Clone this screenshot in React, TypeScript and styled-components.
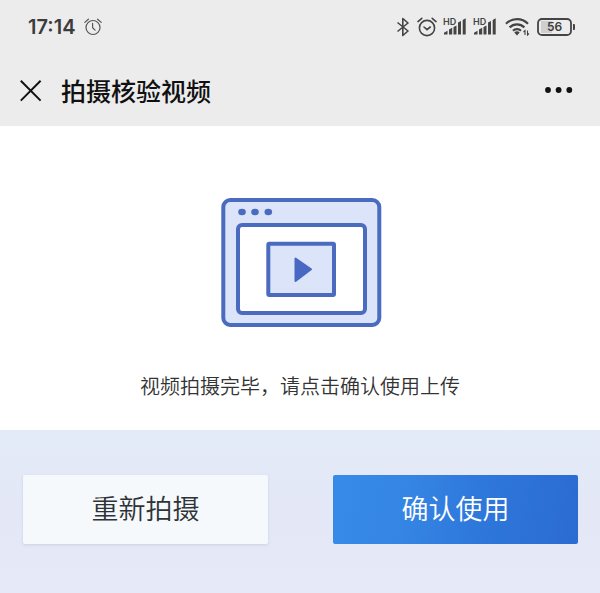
import React from "react";
import styled, { createGlobalStyle, css } from "styled-components";

const GlobalStyle = createGlobalStyle`
  *, *::before, *::after { box-sizing: border-box; }
  html, body { margin: 0; padding: 0; }
  body {
    background: #e4e9f7;
    font-family: "Noto Sans CJK SC", "Noto Sans", sans-serif;
    color: #333;
  }
  svg { display: block; flex: none; }
`;

const Page = styled.div`
  display: flex;
  flex-direction: column;
  min-height: 100vh;
`;

const Header = styled.header`
  background: #ececec;
`;

const StatusBar = styled.div`
  display: flex;
  align-items: center;
  justify-content: space-between;
  height: 54px;
  padding: 0 24px 0 28px;
  color: #444;
`;

const StatusLeft = styled.div`
  display: flex;
  align-items: center;
  gap: 9px;
`;

const Clock = styled.time`
  font-family: Inter, "Liberation Sans", sans-serif;
  font-size: 20px;
  line-height: 24px;
  font-weight: 600;
  color: #3c3c3c;
`;

const StatusRight = styled.div`
  display: flex;
  align-items: center;
  gap: 6px;
`;

const HdText = styled.text`
  font-family: Inter, "Liberation Sans", sans-serif;
  font-size: 9px;
  font-weight: 600;
  fill: #444;
`;

const BatteryText = styled.text`
  font-family: Inter, "Liberation Sans", sans-serif;
  font-size: 12px;
  font-weight: 600;
  fill: #3c3c3c;
`;

const NavBar = styled.nav`
  display: flex;
  align-items: center;
  height: 72px;
  padding: 0 25px 0 18px;
`;

const IconButton = styled.button`
  display: flex;
  align-items: center;
  justify-content: center;
  padding: 0;
  border: 0;
  background: none;
  color: #111;
  cursor: pointer;
`;

const Title = styled.h1`
  flex: 1;
  margin: 0 0 0 18px;
  font-size: 25px;
  line-height: 36px;
  font-weight: 500;
  color: #111;
`;

const Content = styled.main`
  display: flex;
  flex-direction: column;
  align-items: center;
  padding: 71px 20px 28px;
  background: #fff;
`;

const Message = styled.p`
  margin: 42px 0 0;
  font-size: 20px;
  line-height: 32px;
  font-weight: 350;
  text-align: center;
  color: #333;
`;

const Actions = styled.footer`
  flex: 1;
  display: grid;
  grid-template-columns: 1fr 1fr;
  align-items: start;
  gap: 65px;
  padding: 45px 22px 48px 23px;
  background: linear-gradient(180deg, #e3eaf8 0%, #e4e8f6 50%, #e5e9f8 100%);
`;

const ActionButton = styled.button<{ $primary?: boolean }>`
  height: 69px;
  padding: 0 0 4px;
  border: 0;
  border-radius: 2px;
  font-family: inherit;
  font-size: 27px;
  line-height: 40px;
  font-weight: 350;
  cursor: pointer;
  ${({ $primary }) =>
    $primary
      ? css`
          color: #fff;
          background: linear-gradient(100deg, #378be8 0%, #3585e4 30%, #2e77db 60%, #2b6bd2 100%);
        `
      : css`
          color: #2f3338;
          background: #f5f9fc;
          box-shadow: 0 1px 3px rgba(150, 170, 190, 0.35);
        `}
`;

const SmallAlarm = () => (
  <svg width="18" height="18" viewBox="0 0 18 18" fill="none" stroke="#555" strokeWidth="1.2" strokeLinecap="round">
    <circle cx="9" cy="9.5" r="7" />
    <path d="M8.6 5.4v4.3l2.5 2.4M.8 4.4 4.4 1.2M17.2 4.4l-3.6-3.2" />
  </svg>
);

const Bluetooth = () => (
  <svg width="14" height="20" viewBox="1 0 14 20" fill="none" stroke="#444" strokeWidth="1.6" strokeLinejoin="round">
    <path d="M1.5 5.5 12 14l-5.2 4.5v-17L12 6 1.5 14.5" />
  </svg>
);

const Alarm = () => (
  <svg width="20" height="20" viewBox="0 0 20 20" fill="none" stroke="#444" strokeWidth="1.6" strokeLinecap="round">
    <circle cx="10" cy="11" r="7.6" />
    <path d="m7 10 3 2.6 3.3-2.6M1 4.6 4.8 1.3M19 4.6l-3.8-3.3" />
  </svg>
);

const Signal = () => (
  <svg width="24" height="20" viewBox="0 0 24 20" fill="#444">
    <HdText x="0" y="7.5">HD</HdText>
    <path d="M1 17.500v-1.800l3.500-2v3.800zM6 17.500v-5l3.200-1.700v6.700zM10.500 17.500V10l3-1.500v9zM15 17.500V5.500L18 4v13.500zM19.700 17.500V3l3-1.700v16.200z" />
  </svg>
);

const Wifi = () => (
  <svg width="28" height="20" viewBox="-2 0 28 20" fill="none" stroke="#444" strokeWidth="2.200">
    <path d="M1 6.800a15.500 15.500 0 0 1 22 0M4.600 10.400a10.500 10.500 0 0 1 14.800 0M8 13.800a5.700 5.700 0 0 1 8 0" />
    <path d="m9.300 15.500 2.700 3 2.700-3a4 4 0 0 0-5.400 0z" fill="#444" stroke="none" />
    <path d="M20 18v-4.500l-1.500 1.500M22.500 13.500V18l1.500-1.500" strokeWidth="1.100" />
  </svg>
);

const Battery = () => (
  <svg width="39" height="18" viewBox="0 0 39 18">
    <path d="M4 3h11v12H4z" fill="#cfcfcf" />
    <rect x="1" y="1" width="33" height="16" rx="4" fill="none" stroke="#444" strokeWidth="1.800" />
    <path d="M36 6h1a1 1 0 0 1 1 1v4a1 1 0 0 1-1 1h-1z" fill="#444" />
    <BatteryText x="17.500" y="13.400" textAnchor="middle">56</BatteryText>
  </svg>
);

const CloseIcon = () => (
  <svg width="25" height="25" viewBox="0 0 25 25" fill="none" stroke="currentColor" strokeWidth="2">
    <path d="m2.800 2.800 19.800 19.800M22.600 2.800 2.800 22.600" />
  </svg>
);

const MoreIcon = () => (
  <svg width="32" height="12" viewBox="0 0 32 12" fill="currentColor">
    <circle cx="5" cy="6" r="2.900" />
    <circle cx="15.600" cy="6" r="2.900" />
    <circle cx="26.300" cy="6" r="2.900" />
  </svg>
);

const VideoWindow = () => (
  <svg width="164" height="131" viewBox="0 0 164 131" fill="#dbe4f8" stroke="#4a6bc0" strokeWidth="4">
    <rect x="5.300" y="3" width="156" height="125" rx="7" />
    <rect x="20" y="28" width="127" height="88" rx="4" fill="#fff" />
    <rect x="50.300" y="46.700" width="65.700" height="51.300" rx="1" />
    <path d="M77.500 61.500v22.500L93 72.300z" fill="#4968c4" stroke="#4968c4" strokeWidth="2" strokeLinejoin="round" />
    <g fill="#4a6bc0" stroke="none">
      <ellipse cx="24" cy="15" rx="3.800" ry="3.200" />
      <ellipse cx="37" cy="15" rx="3.800" ry="3.200" />
      <ellipse cx="50.300" cy="15" rx="3.800" ry="3.200" />
    </g>
  </svg>
);

export default function App() {
  return (
    <Page>
      <GlobalStyle />
      <Header>
        <StatusBar>
          <StatusLeft>
            <Clock>17:14</Clock>
            <SmallAlarm />
          </StatusLeft>
          <StatusRight>
            <Bluetooth />
            <Alarm />
            <Signal />
            <Signal />
            <Wifi />
            <Battery />
          </StatusRight>
        </StatusBar>
        <NavBar>
          <IconButton type="button" aria-label="关闭">
            <CloseIcon />
          </IconButton>
          <Title>拍摄核验视频</Title>
          <IconButton type="button" aria-label="更多">
            <MoreIcon />
          </IconButton>
        </NavBar>
      </Header>
      <Content>
        <VideoWindow />
        <Message>视频拍摄完毕，请点击确认使用上传</Message>
      </Content>
      <Actions>
        <ActionButton type="button">重新拍摄</ActionButton>
        <ActionButton type="button" $primary>
          确认使用
        </ActionButton>
      </Actions>
    </Page>
  );
}
